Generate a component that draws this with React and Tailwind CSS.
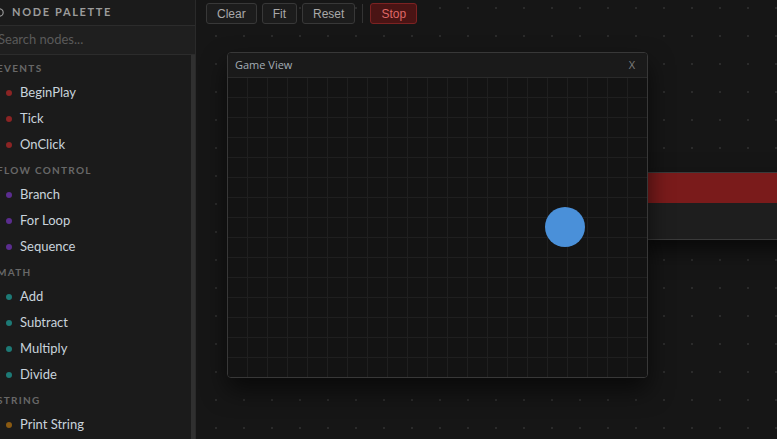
import React from "react";

const categories = [
  {
    name: "Events",
    dot: "bg-[#8b2424]",
    items: ["BeginPlay", "Tick", "OnClick"],
  },
  {
    name: "Flow Control",
    dot: "bg-[#5b2d8f]",
    items: ["Branch", "For Loop", "Sequence"],
  },
  {
    name: "Math",
    dot: "bg-[#1d7a76]",
    items: ["Add", "Subtract", "Multiply", "Divide"],
  },
  {
    name: "String",
    dot: "bg-[#8a5a12]",
    items: ["Print String"],
  },
];

function GearIcon() {
  return (
    <svg width="11" height="11" viewBox="0 0 24 24" fill="none" stroke="currentColor" strokeWidth="2.5">
      <circle cx="12" cy="12" r="8" />
    </svg>
  );
}

function Palette() {
  return (
    <aside className="w-[196px] shrink-0 h-full bg-[#1b1b1b] border-r border-[#2a2a2a] overflow-hidden flex flex-col font-['Lato','Noto_Sans',sans-serif]">
      {/* header, scrolled a bit to the left */}
      <div className="h-[26px] shrink-0 border-b border-[#2c2c2c] flex items-center gap-[7px] -ml-[6px] text-[#9c9c9c]">
        <GearIcon />
        <span className="text-[11px] font-bold tracking-[0.15em]">NODE PALETTE</span>
      </div>
      <div className="h-[29px] shrink-0 bg-[#1f1f1f] border-b border-[#2c2c2c] flex items-center -ml-[2px]">
        <span className="text-[13px] text-[#5a5a5a]">Search nodes...</span>
      </div>
      <div className="flex-1 flex min-h-0">
        <div className="flex-1 -ml-[3px]">
          {categories.map((cat) => (
            <div key={cat.name}>
              <div className="h-[24px] pt-[2px] flex items-center text-[10px] font-bold tracking-[0.13em] uppercase text-[#686868]">
                {cat.name}
              </div>
              {cat.items.map((item) => (
                <div key={item} className="h-[26px] pt-[2px] flex items-center pl-[9px] gap-[8px]">
                  <span className={`w-[6px] h-[6px] rounded-full ${cat.dot}`} />
                  <span className="text-[13px] text-[#c9d3dc]">{item}</span>
                </div>
              ))}
            </div>
          ))}
        </div>
        <div className="w-[4px] bg-[#303030]" />
      </div>
    </aside>
  );
}

function Btn({ children, danger }) {
  return (
    <button
      className={
        danger
          ? "h-[21px] px-[10px] rounded-[3px] border border-[#7c2222] bg-[#4a1414] text-[12px] text-[#df6767]"
          : "h-[21px] px-[10px] rounded-[3px] border border-[#383838] bg-[#1c1c1c] text-[12px] text-[#a9a9a9]"
      }
    >
      {children}
    </button>
  );
}

function GameView() {
  return (
    <div className="absolute left-[31px] top-[52px] w-[421px] h-[326px] rounded-[4px] border border-[#383838] bg-[#131313] shadow-[0_12px_24px_rgba(0,0,0,0.6)] flex flex-col overflow-hidden font-['Open_Sans','Noto_Sans',sans-serif]">
      <div className="h-[25px] shrink-0 bg-[#1a1a1a] border-b border-[#2a2a2a] flex items-center justify-between px-[7px]">
        <span className="text-[11px] text-[#a4adb5]">Game View</span>
        <span className="text-[11px] text-[#7e7e7e] mr-[5px]">X</span>
      </div>
      <div className="relative flex-1 bg-[#131313] bg-[linear-gradient(to_right,#1f1f1f_1px,transparent_1px),linear-gradient(to_bottom,#1f1f1f_1px,transparent_1px)] bg-[size:20px_20px] bg-[position:-1px_-1px]">
        <div className="absolute left-[317px] top-[129px] w-[40px] h-[40px] rounded-full bg-[#4a90d9]" />
      </div>
    </div>
  );
}

export default function App() {
  return (
    <div className="w-[777px] h-[439px] flex bg-[#161616] overflow-hidden font-['Liberation_Sans',Arial,sans-serif]">
      <Palette />
      <main className="relative flex-1 h-full bg-[#161616] bg-[radial-gradient(circle,#2b2b2b_1.2px,transparent_1.4px)] bg-[size:28px_28px] bg-[position:6px_-6px]">
        {/* toolbar */}
        <div className="flex items-center gap-[5px] pl-[10px] pt-[3px]">
          <Btn>Clear</Btn>
          <Btn>Fit</Btn>
          <Btn>Reset</Btn>
          <div className="w-px h-[19px] bg-[#333] mx-[2px]" />
          <Btn danger>Stop</Btn>
        </div>

        {/* node partly behind the game view */}
        <div className="absolute left-[440px] top-[172px] w-[200px] h-[68px] border-y border-[#3a3a3a] shadow-[0_10px_20px_rgba(0,0,0,0.6)]">
          <div className="h-[30px] bg-[#7a1b1b]" />
          <div className="h-[36px] bg-[#1e1e1e]" />
        </div>

        <GameView />
      </main>
    </div>
  );
}
